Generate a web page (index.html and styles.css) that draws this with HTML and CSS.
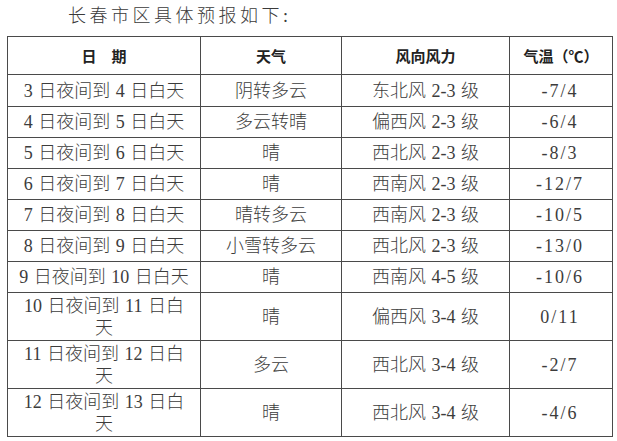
FILE: index.html
```html
<!DOCTYPE html>
<html lang="zh-CN">
<head>
<meta charset="utf-8">
<title>长春市区具体预报</title>
<link rel="stylesheet" href="styles.css">
</head>
<body>
<div class="page">
  <p class="title">长春市区具体预报如下:</p>
  <table class="forecast">
    <colgroup>
      <col class="c-date">
      <col class="c-wx">
      <col class="c-wind">
      <col class="c-temp">
    </colgroup>
    <thead>
      <tr class="head">
        <th>日&emsp;期</th>
        <th>天气</th>
        <th>风向风力</th>
        <th>气温（℃）</th>
      </tr>
    </thead>
    <tbody>
      <tr><td class="date">3 日夜间到 4 日白天</td><td>阴转多云</td><td class="wind">东北风 2-3 级</td><td class="temp">-7/4</td></tr>
      <tr><td class="date">4 日夜间到 5 日白天</td><td>多云转晴</td><td class="wind">偏西风 2-3 级</td><td class="temp">-6/4</td></tr>
      <tr><td class="date">5 日夜间到 6 日白天</td><td>晴</td><td class="wind">西北风 2-3 级</td><td class="temp">-8/3</td></tr>
      <tr><td class="date">6 日夜间到 7 日白天</td><td>晴</td><td class="wind">西南风 2-3 级</td><td class="temp">-12/7</td></tr>
      <tr><td class="date">7 日夜间到 8 日白天</td><td>晴转多云</td><td class="wind">西南风 2-3 级</td><td class="temp">-10/5</td></tr>
      <tr><td class="date">8 日夜间到 9 日白天</td><td>小雪转多云</td><td class="wind">西北风 2-3 级</td><td class="temp">-13/0</td></tr>
      <tr><td class="date">9 日夜间到 10 日白天</td><td>晴</td><td class="wind">西南风 4-5 级</td><td class="temp">-10/6</td></tr>
      <tr class="tall"><td class="date">10 日夜间到 11 日白天</td><td>晴</td><td class="wind">偏西风 3-4 级</td><td class="temp">0/11</td></tr>
      <tr class="tall"><td class="date">11 日夜间到 12 日白天</td><td>多云</td><td class="wind">西北风 3-4 级</td><td class="temp">-2/7</td></tr>
      <tr class="tall"><td class="date">12 日夜间到 13 日白天</td><td>晴</td><td class="wind">西北风 3-4 级</td><td class="temp">-4/6</td></tr>
    </tbody>
  </table>
</div>
</body>
</html>
```

FILE: styles.css
```css
html, body {
  margin: 0;
  padding: 0;
  background: #ffffff;
}

.page {
  width: 617px;
  height: 441px;
  overflow: hidden;
  font-family: "Liberation Serif", "Noto Sans CJK SC", serif;
  color: #333333;
}

.title {
  margin: 0;
  height: 36px;
  line-height: 33px;
  padding-left: 68px;
  font-size: 18px;
  letter-spacing: 3.5px;
  font-weight: 300;
  color: #3a3a3a;
}

.forecast {
  margin-left: 7px;
  width: 605px;
  border-collapse: collapse;
  table-layout: fixed;
}

.c-date { width: 193px; }
.c-wx { width: 141px; }
.c-wind { width: 168px; }
.c-temp { width: 103px; }

.forecast th,
.forecast td {
  border: 1px solid #4a4a4a;
  text-align: center;
  vertical-align: middle;
  padding: 0 9px;
}

.forecast th {
  height: 37px;
  font-size: 15px;
  font-weight: 700;
  color: #222222;
}

.forecast td {
  height: 30px;
  font-size: 18px;
  line-height: 22px;
  font-weight: 300;
  color: #3c3c3c;
}

.forecast td.date,
.forecast td.wind {
  word-spacing: 1px;
}

.forecast td.temp {
  letter-spacing: 2px;
  text-indent: -2px;
}

.forecast tbody tr:first-child td {
  height: 31px;
}

.forecast tr.tall td {
  height: 47px;
}
```
